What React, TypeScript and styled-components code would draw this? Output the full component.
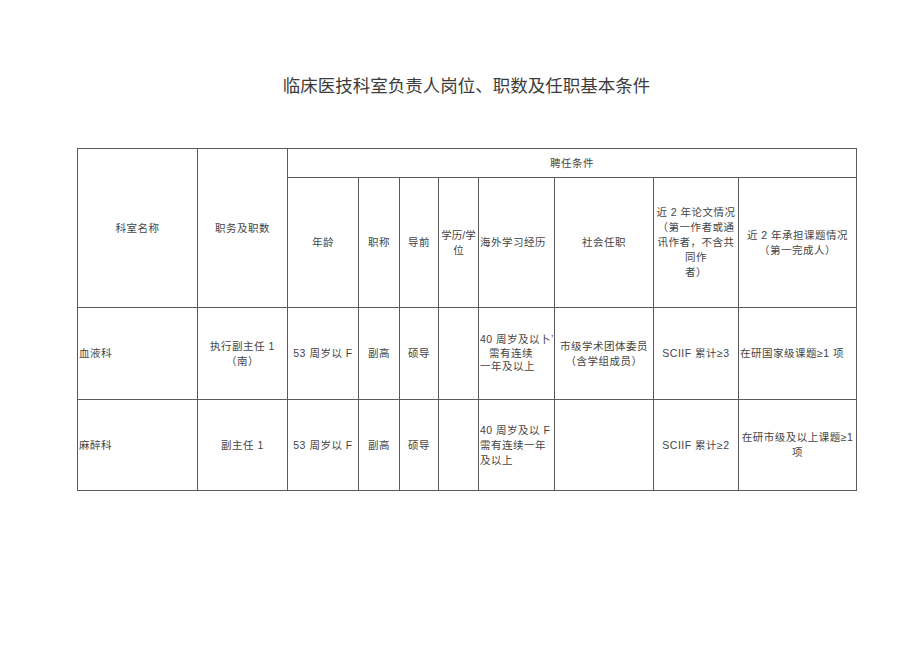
import styled, { createGlobalStyle } from 'styled-components';

export default function App() {
  return (
    <>
      <GlobalStyle />
      <Page>
        <Title>临床医技科室负责人岗位、职数及任职基本条件</Title>
        <Table>
          <colgroup>
            {COL_WIDTHS.map((w, i) => (
              <Col key={i} width={w} />
            ))}
          </colgroup>
          <tbody>
            <Row height={29}>
              <Cell rowSpan={2}>科室名称</Cell>
              <Cell rowSpan={2}>职务及职数</Cell>
              <Cell colSpan={8}>聘任条件</Cell>
            </Row>
            <Row height={130}>
              <Cell>年龄</Cell>
              <Cell>职称</Cell>
              <Cell>导前</Cell>
              <Cell tight>
                学历/学
                <br />位
              </Cell>
              <Cell align="left">海外学习经历</Cell>
              <Cell>社会任职</Cell>
              <Cell>
                近 2 年论文情况
                <br />
                （第一作者或通
                <br />
                讯作者，不含共
                <br />
                同作
                <br />
                者）
              </Cell>
              <Cell>
                近 2 年承担课题情况
                <br />
                （第一完成人）
              </Cell>
            </Row>
            <Row height={92}>
              <Cell align="left">血液科</Cell>
              <Cell>
                执行副主任 1
                <br />
                （南）
              </Cell>
              <Cell>53 周岁以 F</Cell>
              <Cell>副高</Cell>
              <Cell>硕导</Cell>
              <Cell />
              <Cell align="left" lh={13.5}>
                40 周岁及以卜’
                <br />
                <Indent>需有连续</Indent>
                <br />
                一年及以上
              </Cell>
              <Cell>
                市级学术团体委员
                <br />
                （含学组成员）
              </Cell>
              <Cell>SCIIF 累计≥3</Cell>
              <Cell align="left">在研国家级课题≥1 项</Cell>
            </Row>
            <Row height={91}>
              <Cell align="left">麻醉科</Cell>
              <Cell>副主任 1</Cell>
              <Cell>53 周岁以 F</Cell>
              <Cell>副高</Cell>
              <Cell>硕导</Cell>
              <Cell />
              <Cell align="left">
                40 周岁及以 F
                <br />
                需有连续一年
                <br />
                及以上
              </Cell>
              <Cell />
              <Cell>SCIIF 累计≥2</Cell>
              <Cell>
                在研市级及以上课题≥1
                <br />项
              </Cell>
            </Row>
          </tbody>
        </Table>
      </Page>
    </>
  );
}

//Constants

const COL_WIDTHS = [120, 90, 71, 41, 39, 40, 76, 99, 85, 118];
const FONT = `"Liberation Sans", "Noto Sans CJK SC", sans-serif`;

//styles

const GlobalStyle = createGlobalStyle`
  html, body {
    margin: 0;
    padding: 0;
    background: #ffffff;
  }
  body {
    font-family: ${FONT};
    color: #444;
  }
`;

const Page = styled.div`
  width: 920px;
  height: 651px;
  box-sizing: border-box;
  padding: 74px 0 0 77px;
`;

const Title = styled.h1`
  width: 779px;
  margin: 0 0 50px;
  font-size: 17.5px;
  line-height: 24px;
  font-weight: 400;
  letter-spacing: 0;
  text-align: center;
  color: #3c3c3c;
`;

const Table = styled.table`
  width: 780px;
  border-collapse: collapse;
  table-layout: fixed;
`;

const Col = styled.col<{ width: number }>`
  width: ${(p) => p.width}px;
`;

const Row = styled.tr<{ height: number }>`
  height: ${(p) => p.height}px;
`;

const Cell = styled.td<{ align?: 'left' | 'center'; lh?: number; tight?: boolean }>`
  border: 1px solid #5a5a5a;
  padding: 0 ${(p) => (p.align === 'left' || p.tight ? '1px' : '2px')};
  text-align: ${(p) => p.align || 'center'};
  vertical-align: middle;
  font-size: 10.5px;
  line-height: ${(p) => p.lh || 15}px;
  letter-spacing: ${(p) => (p.tight ? '0' : '0.5px')};
  color: #444;
  white-space: nowrap;
  overflow: hidden;
`;

const Indent = styled.span`
  padding-left: 9px;
`;
